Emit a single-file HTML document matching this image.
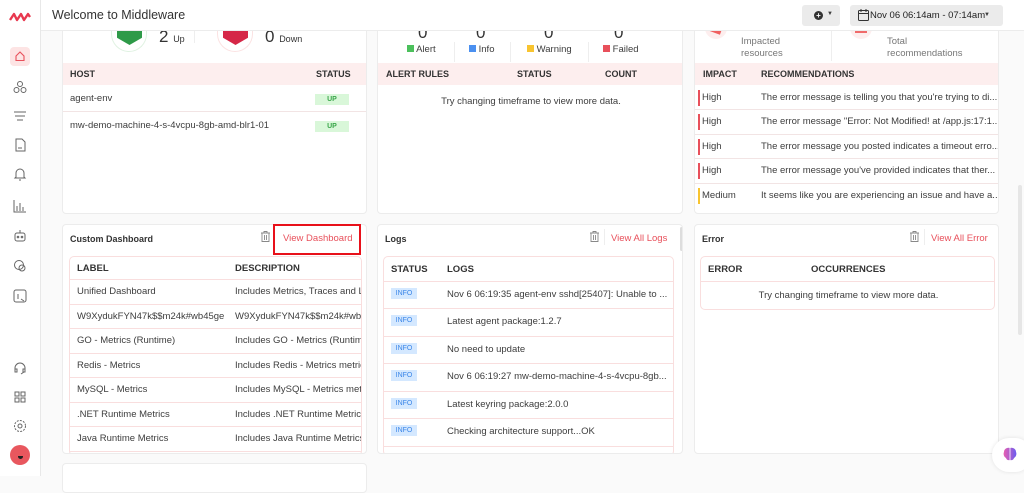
<!DOCTYPE html>
<html><head><meta charset="utf-8">
<style>
*{box-sizing:border-box;margin:0;padding:0}
body{width:1024px;height:476px;overflow:hidden;background:#fafafa;font-family:"Liberation Sans",sans-serif;color:#3d3d3d;position:relative;font-size:9.5px}
.abs{position:absolute}
.side{left:0;top:0;width:41px;height:476px;background:#fff;border-right:1px solid #e8e8e8;z-index:10}
.top{left:41px;top:0;width:983px;height:31px;background:#fff;border-bottom:1px solid #ececec;z-index:10}
.panel{position:absolute;background:#fff;border:1px solid #ececec;border-radius:4px;overflow:hidden}
.th{position:absolute;background:#fdeeee;height:22px;font-weight:bold;font-size:9px;color:#333}
.th span,.row span{position:absolute;top:0;line-height:22px;white-space:nowrap}
.row{position:absolute;border-bottom:1px solid #f2e4e4;white-space:nowrap}
.up{background:#d9f7d9;color:#3aa64a;font-size:7px;font-weight:bold;width:34px;height:11px;line-height:11px;text-align:center;position:absolute}
.info{background:#d4e8ff;color:#3b86e8;font-size:7px;width:26px;height:11px;line-height:11px;text-align:center;position:absolute;left:7px}
.bar{position:absolute;left:3px;width:2px;height:16px}
.ptitle{position:absolute;font-weight:bold;font-size:9px;color:#333}
.link{position:absolute;color:#e8505b;font-size:9.5px}
.inner{position:absolute;border:1px solid #f9dede;border-radius:5px;overflow:hidden;background:#fff}
.ih{position:absolute;left:0;right:0;top:0;height:23px;border-bottom:1px solid #f9dede;font-weight:bold;color:#333}
.ih span{position:absolute;line-height:23px}
.ir{position:absolute;left:0;right:0;border-bottom:1px solid #f9dede;white-space:nowrap;overflow:hidden}
.ir span{position:absolute;line-height:24px}
.ic{position:absolute;left:12px;width:16px;height:16px}
</style></head><body>

<div class="abs side">
 <svg class="abs" style="left:9px;top:12px" width="22" height="10" viewBox="0 0 22 10"><path d="M1 8 L5 2 L8 8 L12 2 L15 8 L19 2 L21 5" stroke="#e8384f" stroke-width="2.4" fill="none" stroke-linejoin="round"/></svg>
 <div class="abs" style="left:10px;top:47px;width:20px;height:19px;background:#fde4e4;border-radius:4px"></div>
 <svg class="abs" style="left:14px;top:50px" width="12" height="12" viewBox="0 0 12 12"><path d="M2 6 L6 2 L10 6 V10.5 H2 Z" fill="none" stroke="#e8505b" stroke-width="1.1"/></svg>
 <svg class="ic" style="top:79px" viewBox="0 0 16 16" fill="none" stroke="#666" stroke-width="1"><circle cx="8" cy="5" r="2.5"/><circle cx="4.5" cy="11" r="2.5"/><circle cx="11.5" cy="11" r="2.5"/></svg>
 <svg class="ic" style="top:108px" viewBox="0 0 16 16" fill="none" stroke="#666" stroke-width="1"><path d="M2 4H14M3 8H13M5 12H11"/></svg>
 <svg class="ic" style="top:137px" viewBox="0 0 16 16" fill="none" stroke="#666" stroke-width="1"><path d="M4 2H10L13 5V14H4Z M6 11H10"/></svg>
 <svg class="ic" style="top:166px" viewBox="0 0 16 16" fill="none" stroke="#666" stroke-width="1"><path d="M4 11V7A4 4 0 0 1 12 7V11L13 12H3Z M7 14H9"/></svg>
 <svg class="ic" style="top:198px" viewBox="0 0 16 16" fill="none" stroke="#666" stroke-width="1"><path d="M2 2V14H14 M5 13V8 M8 13V5 M11 13V9"/></svg>
 <svg class="ic" style="top:228px" viewBox="0 0 16 16" fill="none" stroke="#666" stroke-width="1"><rect x="3" y="5" width="10" height="8" rx="2"/><path d="M8 5V2"/><circle cx="6" cy="9" r="0.8"/><circle cx="10" cy="9" r="0.8"/></svg>
 <svg class="ic" style="top:258px" viewBox="0 0 16 16" fill="none" stroke="#666" stroke-width="1"><circle cx="7" cy="7" r="4.5"/><circle cx="10" cy="10" r="3"/></svg>
 <svg class="ic" style="top:288px" viewBox="0 0 16 16" fill="none" stroke="#666" stroke-width="1"><rect x="2" y="2" width="12" height="12" rx="2"/><path d="M6 6V11 M9 11L12 13"/></svg>
 <svg class="ic" style="top:360px" viewBox="0 0 16 16" fill="none" stroke="#666" stroke-width="1"><path d="M3 10V8A5 5 0 0 1 13 8V10 M3 9H5V12H3Z M11 9H13V12H11Z M12 12L9 14"/></svg>
 <svg class="ic" style="top:389px" viewBox="0 0 16 16" fill="none" stroke="#666" stroke-width="1"><rect x="3" y="3" width="4" height="4"/><rect x="9" y="3" width="4" height="4"/><rect x="3" y="9" width="4" height="4"/><rect x="9" y="9" width="4" height="4"/></svg>
 <svg class="ic" style="top:418px" viewBox="0 0 16 16" fill="none" stroke="#666" stroke-width="1"><circle cx="8" cy="8" r="2"/><circle cx="8" cy="8" r="5.5" stroke-dasharray="2 1.2"/></svg>
 <div class="abs" style="left:10px;top:445px;width:20px;height:20px;border-radius:50%;background:#e8575e"></div>
 <div class="abs" style="left:18px;top:456px;width:5px;height:3px;border-radius:0 0 3px 3px;background:#222"></div>
</div>

<div class="abs top">
 <div class="abs" style="left:11px;top:8px;font-size:12.5px;color:#333">Welcome to Middleware</div>
 <div class="abs" style="left:761px;top:5px;width:38px;height:21px;background:#ebebeb;border-radius:3px"></div>
 <div class="abs" style="left:773px;top:11px;width:9px;height:9px;border-radius:50%;background:#333;color:#fff;font-size:8px;line-height:9px;text-align:center;font-weight:bold">+</div>
 <div class="abs" style="left:786px;top:11px;font-size:6px">▼</div>
 <div class="abs" style="left:809px;top:5px;width:153px;height:21px;background:#ebebeb;border-radius:3px"></div>
 <svg class="abs" style="left:817px;top:9px" width="11" height="12" viewBox="0 0 11 12" fill="none" stroke="#333" stroke-width="1"><rect x="0.5" y="1.5" width="10" height="10" rx="1"/><path d="M0.5 4.5H10.5 M3 0V3 M8 0V3"/></svg>
 <div class="abs" style="left:829px;top:10px;font-size:9.5px;color:#222">Nov 06 06:14am - 07:14am</div>
 <div class="abs" style="left:943px;top:12px;font-size:6px">▼</div>
</div>

<!-- Row 1 col 1 -->
<div class="panel" style="left:62px;top:20px;width:305px;height:194px">
 <div class="abs" style="left:48px;top:0;width:36px;height:31px;border-radius:0 0 18px 18px;border:1px solid #e0f2e2;border-top:none"></div>
 <div class="abs" style="left:54px;top:0;width:25px;height:24px;background:#2e9a48;clip-path:polygon(0 0,100% 0,100% 70%,50% 100%,0 70%)"></div>
 <div class="abs" style="left:96px;top:6px;font-size:17px;color:#333">2 <span style="font-size:9px">Up</span></div>
 <div class="abs" style="left:131px;top:0;width:1px;height:22px;background:#eee"></div>
 <div class="abs" style="left:154px;top:0;width:36px;height:31px;border-radius:0 0 18px 18px;border:1px solid #fbe2e2;border-top:none"></div>
 <div class="abs" style="left:160px;top:0;width:25px;height:24px;background:#d52747;clip-path:polygon(0 0,100% 0,100% 70%,50% 100%,0 70%)"></div>
 <div class="abs" style="left:202px;top:6px;font-size:17px;color:#333">0 <span style="font-size:9px">Down</span></div>
 <div class="th" style="left:0;top:42px;width:305px"><span style="left:7px">HOST</span><span style="left:253px">STATUS</span></div>
 <div class="row" style="left:0;top:64px;width:305px;height:27px"><span style="left:7px;line-height:27px">agent-env</span><div class="up" style="left:252px;top:9px">UP</div></div>
 <div class="row" style="left:0;top:91px;width:305px;height:27px;border:none"><span style="left:7px;line-height:27px">mw-demo-machine-4-s-4vcpu-8gb-amd-blr1-01</span><div class="up" style="left:252px;top:9px">UP</div></div>
</div>

<!-- Row 1 col 2 -->
<div class="panel" style="left:377px;top:20px;width:306px;height:194px">
 <div class="abs" style="left:40px;top:2px;font-size:17px;color:#333">0</div>
 <div class="abs" style="left:98px;top:2px;font-size:17px;color:#333">0</div>
 <div class="abs" style="left:166px;top:2px;font-size:17px;color:#333">0</div>
 <div class="abs" style="left:236px;top:2px;font-size:17px;color:#333">0</div>
 <div class="abs" style="left:29px;top:23px"><span style="display:inline-block;width:7px;height:7px;background:#4cc05c"></span> Alert</div>
 <div class="abs" style="left:76px;top:21px;width:1px;height:20px;background:#eee"></div>
 <div class="abs" style="left:91px;top:23px"><span style="display:inline-block;width:7px;height:7px;background:#4b90f0"></span> Info</div>
 <div class="abs" style="left:132px;top:21px;width:1px;height:20px;background:#eee"></div>
 <div class="abs" style="left:149px;top:23px"><span style="display:inline-block;width:7px;height:7px;background:#f8c430"></span> Warning</div>
 <div class="abs" style="left:210px;top:21px;width:1px;height:20px;background:#eee"></div>
 <div class="abs" style="left:225px;top:23px"><span style="display:inline-block;width:7px;height:7px;background:#e8505b"></span> Failed</div>
 <div class="th" style="left:0;top:42px;width:306px"><span style="left:8px">ALERT RULES</span><span style="left:139px">STATUS</span><span style="left:227px">COUNT</span></div>
 <div class="abs" style="left:0;width:306px;text-align:center;top:75px">Try changing timeframe to view more data.</div>
</div>

<!-- Row 1 col 3 -->
<div class="panel" style="left:694px;top:20px;width:305px;height:194px">
 <div class="abs" style="left:10px;top:0;width:22px;height:18px;border-radius:0 0 11px 11px;background:#fdeeee"></div>
 <div class="abs" style="left:15px;top:2px;width:12px;height:10px;background:#f06060;transform:rotate(20deg)"></div>
 <div class="abs" style="left:46px;top:15px;color:#777;line-height:12px">Impacted<br>resources</div>
 <div class="abs" style="left:136px;top:0;width:1px;height:40px;background:#eee"></div>
 <div class="abs" style="left:155px;top:0;width:22px;height:18px;border-radius:0 0 11px 11px;background:#fdeeee"></div>
 <div class="abs" style="left:160px;top:0;width:12px;height:12px;background:#f06a6a"></div>
 <div class="abs" style="left:192px;top:15px;color:#777;line-height:12px">Total<br>recommendations</div>
 <div class="th" style="left:0;top:42px;width:305px"><span style="left:8px">IMPACT</span><span style="left:66px">RECOMMENDATIONS</span></div>
 <div class="row" style="left:0;top:65px;width:305px;height:24px"><div class="bar" style="top:4px;background:#e8505b"></div><span style="left:7px;line-height:24px">High</span><span style="left:66px;line-height:24px">The error message is telling you that you're trying to di...</span></div>
 <div class="row" style="left:0;top:89px;width:305px;height:25px"><div class="bar" style="top:4px;background:#e8505b"></div><span style="left:7px;line-height:24px">High</span><span style="left:66px;line-height:24px">The error message "Error: Not Modified! at /app.js:17:1...</span></div>
 <div class="row" style="left:0;top:114px;width:305px;height:24px"><div class="bar" style="top:4px;background:#e8505b"></div><span style="left:7px;line-height:24px">High</span><span style="left:66px;line-height:24px">The error message you posted indicates a timeout erro...</span></div>
 <div class="row" style="left:0;top:138px;width:305px;height:25px"><div class="bar" style="top:4px;background:#e8505b"></div><span style="left:7px;line-height:24px">High</span><span style="left:66px;line-height:24px">The error message you've provided indicates that ther...</span></div>
 <div class="row" style="left:0;top:163px;width:305px;height:24px;border:none"><div class="bar" style="top:4px;background:#f8c430"></div><span style="left:7px;line-height:24px">Medium</span><span style="left:66px;line-height:24px">It seems like you are experiencing an issue and have a...</span></div>
</div>

<!-- Row 2 col 1 -->
<div class="panel" style="left:62px;top:224px;width:305px;height:230px">
 <div class="ptitle" style="left:7px;top:9px">Custom Dashboard</div>
 <svg class="abs" style="left:198px;top:6px" width="9" height="11" viewBox="0 0 9 11" fill="none" stroke="#888" stroke-width="0.9"><path d="M0 2H9 M3 2V0.5H6V2 M1 2V10.5H8V2 M3.5 4V9 M5.5 4V9"/></svg>
 <div class="link" style="left:220px;top:8px">View Dashboard</div>
 <div class="inner" style="left:6px;top:31px;width:293px;height:200px">
  <div class="ih"><span style="left:7px">LABEL</span><span style="left:165px">DESCRIPTION</span></div>
  <div class="ir" style="top:23px;height:25px"><span style="left:7px">Unified Dashboard</span><span style="left:165px">Includes Metrics, Traces and L</span></div>
  <div class="ir" style="top:48px;height:24px"><span style="left:7px">W9XydukFYN47k$$m24k#wb45ge</span><span style="left:165px">W9XydukFYN47k$$m24k#wb4</span></div>
  <div class="ir" style="top:72px;height:25px"><span style="left:7px">GO - Metrics (Runtime)</span><span style="left:165px">Includes GO - Metrics (Runtime</span></div>
  <div class="ir" style="top:97px;height:24px"><span style="left:7px">Redis - Metrics</span><span style="left:165px">Includes Redis - Metrics metric</span></div>
  <div class="ir" style="top:121px;height:25px"><span style="left:7px">MySQL - Metrics</span><span style="left:165px">Includes MySQL - Metrics metr</span></div>
  <div class="ir" style="top:146px;height:24px"><span style="left:7px">.NET Runtime Metrics</span><span style="left:165px">Includes .NET Runtime Metrics</span></div>
  <div class="ir" style="top:170px;height:25px"><span style="left:7px">Java Runtime Metrics</span><span style="left:165px">Includes Java Runtime Metrics</span></div>
 </div>
</div>
<div class="abs" style="left:273px;top:224px;width:88px;height:31px;border:2px solid #e8101a"></div>

<!-- Row 2 col 2 -->
<div class="panel" style="left:377px;top:224px;width:306px;height:230px">
 <div class="ptitle" style="left:7px;top:9px">Logs</div>
 <svg class="abs" style="left:212px;top:6px" width="9" height="11" viewBox="0 0 9 11" fill="none" stroke="#888" stroke-width="0.9"><path d="M0 2H9 M3 2V0.5H6V2 M1 2V10.5H8V2 M3.5 4V9 M5.5 4V9"/></svg>
 <div class="abs" style="left:226px;top:4px;width:1px;height:16px;background:#eee"></div>
 <div class="link" style="left:233px;top:8px">View All Logs</div>
 <div class="abs" style="left:302px;top:2px;width:3px;height:24px;background:#ddd;border-radius:2px"></div>
 <div class="inner" style="left:5px;top:31px;width:291px;height:200px">
  <div class="ih" style="height:25px"><span style="left:7px;line-height:25px">STATUS</span><span style="left:63px;line-height:25px">LOGS</span></div>
  <div class="ir" style="top:25px;height:27px"><div class="info" style="top:6px">INFO</div><span style="left:63px;line-height:26px">Nov 6 06:19:35 agent-env sshd[25407]: Unable to ...</span></div>
  <div class="ir" style="top:52px;height:28px"><div class="info" style="top:6px">INFO</div><span style="left:63px;line-height:26px">Latest agent package:1.2.7</span></div>
  <div class="ir" style="top:80px;height:27px"><div class="info" style="top:6px">INFO</div><span style="left:63px;line-height:26px">No need to update</span></div>
  <div class="ir" style="top:107px;height:28px"><div class="info" style="top:6px">INFO</div><span style="left:63px;line-height:26px">Nov 6 06:19:27 mw-demo-machine-4-s-4vcpu-8gb...</span></div>
  <div class="ir" style="top:135px;height:27px"><div class="info" style="top:6px">INFO</div><span style="left:63px;line-height:26px">Latest keyring package:2.0.0</span></div>
  <div class="ir" style="top:162px;height:28px"><div class="info" style="top:6px">INFO</div><span style="left:63px;line-height:26px">Checking architecture support...OK</span></div>
  <div class="ir" style="top:190px;height:27px"><div class="info" style="top:6px">INFO</div></div>
 </div>
</div>

<!-- Row 2 col 3 -->
<div class="panel" style="left:694px;top:224px;width:305px;height:230px">
 <div class="ptitle" style="left:7px;top:9px">Error</div>
 <svg class="abs" style="left:215px;top:6px" width="9" height="11" viewBox="0 0 9 11" fill="none" stroke="#888" stroke-width="0.9"><path d="M0 2H9 M3 2V0.5H6V2 M1 2V10.5H8V2 M3.5 4V9 M5.5 4V9"/></svg>
 <div class="abs" style="left:229px;top:4px;width:1px;height:16px;background:#eee"></div>
 <div class="link" style="left:236px;top:8px">View All Error</div>
 <div class="inner" style="left:5px;top:31px;width:295px;height:54px">
  <div class="ih" style="height:25px"><span style="left:7px;line-height:25px">ERROR</span><span style="left:110px;line-height:25px">OCCURRENCES</span></div>
  <div class="abs" style="left:0;width:295px;text-align:center;top:33px">Try changing timeframe to view more data.</div>
 </div>
</div>

<!-- Row 3 -->
<div class="panel" style="left:62px;top:463px;width:305px;height:30px"></div>

<div class="abs" style="left:1018px;top:185px;width:4px;height:150px;background:#e6e6e6;border-radius:2px"></div>
<div class="abs" style="left:992px;top:438px;width:40px;height:34px;background:#fff;border-radius:17px;box-shadow:0 0 4px rgba(0,0,0,.1)"></div>
<svg class="abs" style="left:1002px;top:446px" width="16" height="16" viewBox="0 0 16 16"><defs><linearGradient id="g" x1="0" x2="1"><stop offset="0" stop-color="#e85fb0"/><stop offset="1" stop-color="#6a5cf0"/></linearGradient></defs><path d="M8 2C5 1 2 3 2 6C1 8 2 11 4 12C5 15 8 14 8 14C8 14 11 15 12 12C14 11 15 8 14 6C14 3 11 1 8 2Z" fill="url(#g)"/><path d="M8 2V14" stroke="#fff" stroke-width="0.8"/></svg>

</body></html>
